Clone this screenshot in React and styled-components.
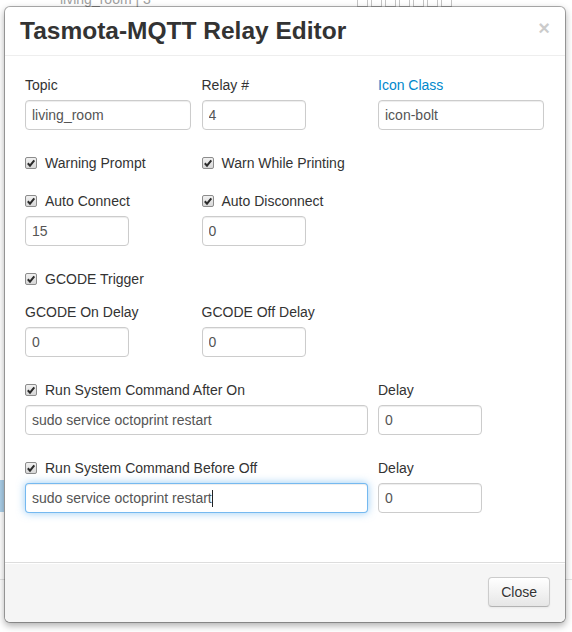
import React from "react";
import styled, { createGlobalStyle } from "styled-components";

const GlobalStyle = createGlobalStyle`
  html, body {
    margin: 0;
    padding: 0;
    background: #fff;
  }
  body {
    font-family: "Liberation Sans", Arial, Helvetica, sans-serif;
    font-size: 14px;
    line-height: 20px;
    color: #333;
  }
  * {
    box-sizing: border-box;
  }
`;

const Page = styled.div`
  position: relative;
  width: 572px;
  height: 632px;
  overflow: hidden;
`;

/* what shows of the page under the dialog */
const Behind = styled.div`
  display: flex;
  flex-direction: column;
`;

const BehindRow = styled.div`
  display: grid;
  grid-template-columns: 297px auto;
  height: 9px;
  padding-left: 60px;
  overflow: hidden;
  color: #a0a0a0;
`;

const BehindText = styled.span`
  margin-top: -11px;
  line-height: 20px;
`;

const TofuGroup = styled.div`
  display: flex;
  gap: 3px;
  margin-top: -6px;
`;

const Tofu = styled.span`
  width: 11px;
  height: 13px;
  border: 1px solid #c4c4c4;
`;

const SelectedMark = styled.div`
  width: 4px;
  height: 32px;
  margin-top: 471px;
  background: #aacfe9;
`;

const RuleLine = styled.div`
  height: 1px;
  margin-top: 67px;
  background: #e3e3e3;
`;

const Modal = styled.div`
  position: absolute;
  top: 6px;
  left: 4px;
  width: 562px;
  background: #fff;
  background-clip: padding-box;
  border: 1px solid rgba(0, 0, 0, 0.3);
  border-radius: 6px;
  box-shadow: 0 3px 7px rgba(0, 0, 0, 0.3);
`;

const Header = styled.div`
  display: flex;
  justify-content: space-between;
  align-items: flex-start;
  padding: 9px 15px;
  border-bottom: 1px solid #eee;
`;

const Title = styled.h3`
  margin: 0;
  font-size: 24.5px;
  line-height: 30px;
  font-weight: bold;
  color: #333;
`;

const CloseX = styled.button`
  margin-top: 2px;
  padding: 0;
  border: 0;
  background: none;
  font-family: inherit;
  font-size: 20px;
  font-weight: bold;
  line-height: 20px;
  color: #000;
  opacity: 0.2;
  cursor: pointer;
`;

const Body = styled.div`
  padding: 19px 20px 49px;
`;

const Row = styled.div`
  display: grid;
  grid-template-columns: 166px 166px 166px;
  column-gap: 10.5px;
  margin-top: ${(p) => p.$mt || 0}px;
`;

const Field = styled.div`
  display: flex;
  flex-direction: column;
  gap: 5px;
  grid-column: ${(p) => (p.$wide ? "span 2" : "auto")};
`;

const FieldLabel = styled.label`
  line-height: 20px;
  color: ${(p) => (p.$accent ? "#0088cc" : "#333")};
`;

const Input = styled.input`
  width: ${(p) => (p.$mini ? "104px" : "100%")};
  height: 30px;
  padding: 4px 6px;
  font-family: inherit;
  font-size: 14px;
  line-height: 20px;
  color: #555;
  background: #fff;
  border: 1px solid #ccc;
  border-radius: 4px;
  box-shadow: inset 0 1px 1px rgba(0, 0, 0, 0.075);
  outline: none;
`;

const FocusedInput = styled.div`
  display: flex;
  align-items: center;
  width: 100%;
  height: 30px;
  padding: 4px 6px;
  font-size: 14px;
  line-height: 20px;
  color: #555;
  background: #fff;
  border: 1px solid rgba(82, 168, 236, 0.8);
  border-radius: 4px;
  box-shadow: inset 0 1px 1px rgba(0, 0, 0, 0.075), 0 0 8px rgba(82, 168, 236, 0.6);
`;

const Caret = styled.span`
  width: 1px;
  height: 17px;
  background: #222;
`;

const Check = styled.label`
  display: flex;
  align-items: center;
  gap: 8px;
  height: 20px;
  color: #333;
`;

const Box = styled.svg`
  flex: none;
  width: 12px;
  height: 12px;
`;

const Footer = styled.div`
  display: flex;
  justify-content: flex-end;
  padding: 14px 15px 15px;
  background: #f5f5f5;
  border-top: 1px solid #ddd;
  border-radius: 0 0 6px 6px;
  box-shadow: inset 0 1px 0 #fff;
`;

const Button = styled.button`
  padding: 4px 12px;
  font-family: inherit;
  font-size: 14px;
  line-height: 20px;
  color: #333;
  text-shadow: 0 1px 1px rgba(255, 255, 255, 0.75);
  background: linear-gradient(#fff, #e6e6e6);
  border: 1px solid #ccc;
  border-bottom-color: #b3b3b3;
  border-radius: 4px;
  box-shadow: inset 0 1px 0 rgba(255, 255, 255, 0.2), 0 1px 2px rgba(0, 0, 0, 0.05);
  cursor: pointer;
`;

const CheckBox = () => (
  <Box viewBox="0 0 12 12">
    <defs>
      <linearGradient id="cbg" x1="0" y1="0" x2="0" y2="1">
        <stop offset="0" stopColor="#f2f2f2" />
        <stop offset="1" stopColor="#d6d6d6" />
      </linearGradient>
    </defs>
    <rect x="0.5" y="0.5" width="11" height="11" rx="1.5" fill="url(#cbg)" stroke="#8c8c8c" />
    <path d="M2.8 6.2 L5 8.6 L9.3 3.3" fill="none" stroke="#2b2b2b" strokeWidth="2" />
  </Box>
);

const CheckItem = ({ children }) => (
  <Check>
    <CheckBox />
    {children}
  </Check>
);

const App = () => (
  <Page>
    <GlobalStyle />
    <Behind>
      <BehindRow>
        <BehindText>living_room | 3</BehindText>
        <TofuGroup>
          {Array.from({ length: 7 }).map((_, i) => (
            <Tofu key={i} />
          ))}
        </TofuGroup>
      </BehindRow>
      <SelectedMark />
      <RuleLine />
    </Behind>

    <Modal>
      <Header>
        <Title>Tasmota-MQTT Relay Editor</Title>
        <CloseX>×</CloseX>
      </Header>

      <Body>
        <Row>
          <Field>
            <FieldLabel>Topic</FieldLabel>
            <Input defaultValue="living_room" />
          </Field>
          <Field>
            <FieldLabel>Relay #</FieldLabel>
            <Input $mini defaultValue="4" />
          </Field>
          <Field>
            <FieldLabel $accent>Icon Class</FieldLabel>
            <Input defaultValue="icon-bolt" />
          </Field>
        </Row>

        <Row $mt={23}>
          <CheckItem>Warning Prompt</CheckItem>
          <CheckItem>Warn While Printing</CheckItem>
        </Row>

        <Row $mt={18}>
          <Field>
            <CheckItem>Auto Connect</CheckItem>
            <Input $mini defaultValue="15" />
          </Field>
          <Field>
            <CheckItem>Auto Disconnect</CheckItem>
            <Input $mini defaultValue="0" />
          </Field>
        </Row>

        <Row $mt={23}>
          <CheckItem>GCODE Trigger</CheckItem>
        </Row>

        <Row $mt={13}>
          <Field>
            <FieldLabel>GCODE On Delay</FieldLabel>
            <Input $mini defaultValue="0" />
          </Field>
          <Field>
            <FieldLabel>GCODE Off Delay</FieldLabel>
            <Input $mini defaultValue="0" />
          </Field>
        </Row>

        <Row $mt={23}>
          <Field $wide>
            <CheckItem>Run System Command After On</CheckItem>
            <Input defaultValue="sudo service octoprint restart" />
          </Field>
          <Field>
            <FieldLabel>Delay</FieldLabel>
            <Input $mini defaultValue="0" />
          </Field>
        </Row>

        <Row $mt={23}>
          <Field $wide>
            <CheckItem>Run System Command Before Off</CheckItem>
            <FocusedInput>
              sudo service octoprint restart
              <Caret />
            </FocusedInput>
          </Field>
          <Field>
            <FieldLabel>Delay</FieldLabel>
            <Input $mini defaultValue="0" />
          </Field>
        </Row>
      </Body>

      <Footer>
        <Button>Close</Button>
      </Footer>
    </Modal>
  </Page>
);

export default App;
